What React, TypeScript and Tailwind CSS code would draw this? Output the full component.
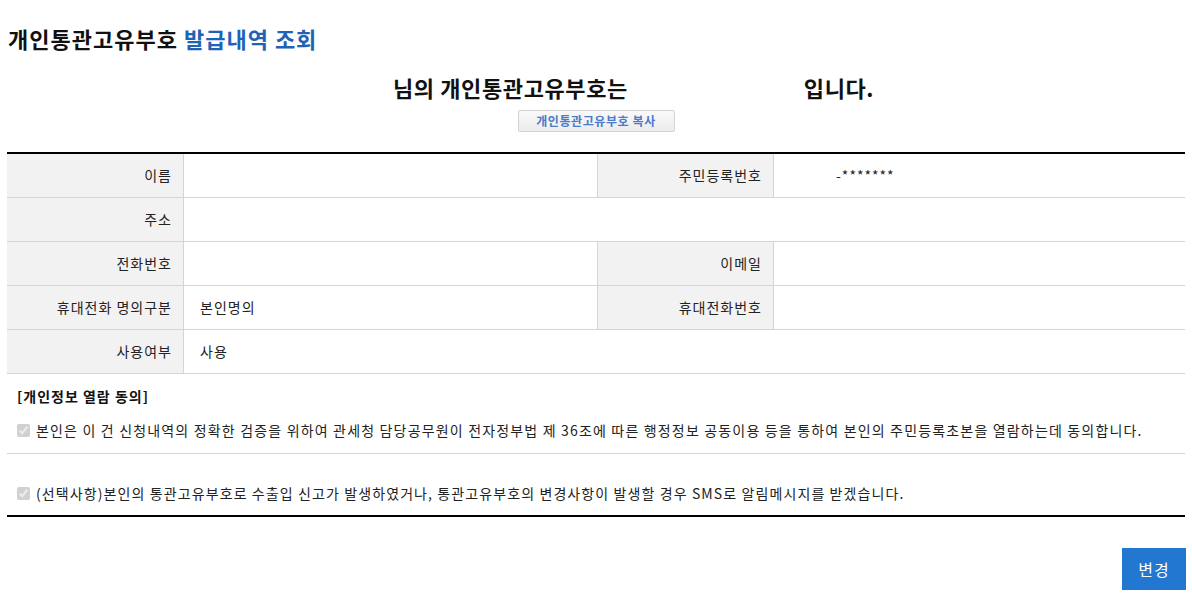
import React from "react";

const FONT = "font-['Malgun_Gothic','Noto_Sans_CJK_KR',sans-serif]";

function Label({ children, first = false }: { children?: React.ReactNode; first?: boolean }) {
  return (
    <div
      className={`flex w-[176px] shrink-0 items-center justify-end bg-[#f2f2f2] pr-[11px] text-[14px] tracking-[1px] text-[#222] ${
        first ? "" : "border-l border-[#d5d5d5]"
      }`}
    >
      {children}
    </div>
  );
}

function Value({ children, className = "" }: { children?: React.ReactNode; className?: string }) {
  return (
    <div className={`flex items-center border-l border-[#d5d5d5] text-[14px] tracking-[1px] text-[#222] ${className}`}>
      {children}
    </div>
  );
}

function Row({ children }: { children: React.ReactNode }) {
  return <div className="flex h-[44px] border-b border-[#d5d5d5]">{children}</div>;
}

export default function App() {
  return (
    <div className={`${FONT} h-[606px] w-[1192px] overflow-hidden bg-white text-[#111]`}>
      <h1 className="pl-[8px] pt-[24px] text-[22px] font-bold leading-[28px] tracking-[1px]">
        개인통관고유부호 <span className="text-[#1e63b6]">발급내역 조회</span>
      </h1>

      {/* 이름/번호 자리는 비어 있음 */}
      <div className="mt-[21px] flex h-[28px] items-center pl-[393px] text-[22px] font-bold leading-[28px] tracking-[0.6px]">
        <span>님의 개인통관고유부호는</span>
        <span className="w-[176px]" />
        <span>입니다.</span>
      </div>

      <div className="mt-[9px] flex justify-center">
        <button className="h-[22px] w-[157px] rounded-[2px] border border-[#d3d3d3] bg-gradient-to-b from-[#f9f9f9] to-[#ececec] text-[12px] font-bold leading-[20px] tracking-[0.6px] text-[#4a7acb]">
          개인통관고유부호 복사
        </button>
      </div>

      <div className="mx-[7px] mt-[20px] border-t-2 border-black">
        <Row>
          <Label first>이름</Label>
          <Value className="w-[414px] pl-[16px]" />
          <Label>주민등록번호</Label>
          <Value className="flex-1 pl-[62px]">-*******</Value>
        </Row>
        <Row>
          <Label first>주소</Label>
          <Value className="flex-1 pl-[16px]" />
        </Row>
        <Row>
          <Label first>전화번호</Label>
          <Value className="w-[414px] pl-[16px]" />
          <Label>이메일</Label>
          <Value className="flex-1 pl-[16px]" />
        </Row>
        <Row>
          <Label first>휴대전화 명의구분</Label>
          <Value className="w-[414px] pl-[16px]">본인명의</Value>
          <Label>휴대전화번호</Label>
          <Value className="flex-1 pl-[16px]" />
        </Row>
        <Row>
          <Label first>사용여부</Label>
          <Value className="flex-1 pl-[16px]">사용</Value>
        </Row>

        <div className="border-b-2 border-black">
          <div className="px-[10px] pt-[12px] text-[14px] font-bold leading-[20px] tracking-[1px] text-[#111]">
            [개인정보 열람 동의]
          </div>
          <label className="flex items-center gap-[6px] px-[10px] pb-[13px] pt-[14px] text-[14px] leading-[20px] tracking-[1.17px] text-[#222]">
            <input type="checkbox" checked disabled readOnly className="m-0 h-[13px] w-[13px]" />
            본인은 이 건 신청내역의 정확한 검증을 위하여 관세청 담당공무원이 전자정부법 제 36조에 따른 행정정보 공동이용 등을 통하여 본인의 주민등록초본을 열람하는데 동의합니다.
          </label>
          <div className="border-t border-[#d5d5d5]" />
          <label className="flex items-center gap-[6px] px-[10px] pb-[12px] pt-[29px] text-[14px] leading-[20px] tracking-[1.1px] text-[#222]">
            <input type="checkbox" checked disabled readOnly className="m-0 h-[13px] w-[13px]" />
            (선택사항)본인의 통관고유부호로 수출입 신고가 발생하였거나, 통관고유부호의 변경사항이 발생할 경우 SMS로 알림메시지를 받겠습니다.
          </label>
        </div>
      </div>

      <div className="mt-[31px] flex justify-end pr-[6px]">
        <button className="h-[42px] w-[64px] bg-[#2277d0] text-[16px] tracking-[1px] text-white">변경</button>
      </div>
    </div>
  );
}
